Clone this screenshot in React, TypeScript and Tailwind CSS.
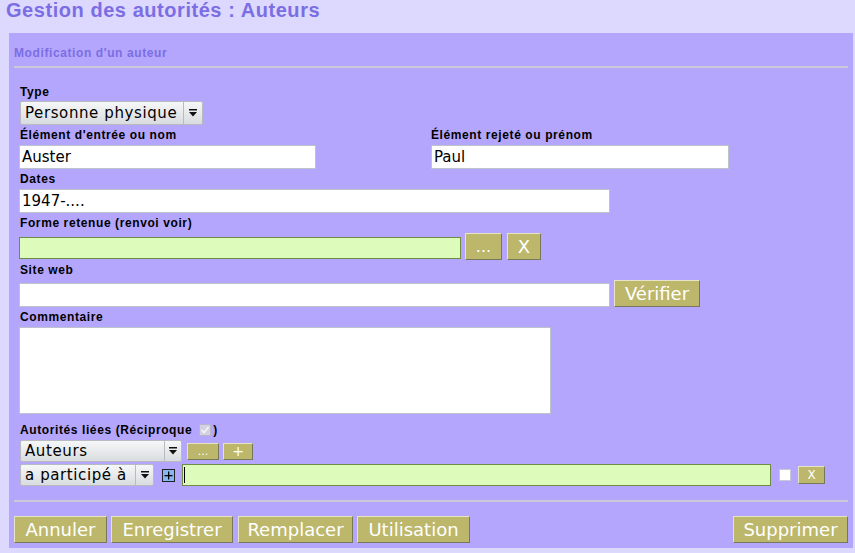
import React from 'react';

const label = "block ml-[1px] text-[12px] leading-[14px] font-bold tracking-[0.6px] text-black";
const input = "h-[24px] border border-[#bcc3cb] bg-white px-[2px] text-[15px] leading-[22px] text-black";
const btn = "flex items-center justify-center bg-[#bdb76b] border border-t-[#e6e4c4] border-l-[#e6e4c4] border-b-[#77775a] border-r-[#77775a] text-white";

function Arrow() {
    return (
        <svg width="10" height="8" viewBox="0 0 10 8">
            <rect x="1" y="0" width="8" height="1.5" fill="#111" />
            <path d="M1 3 L9 3 L5 7.5 Z" fill="#111" />
        </svg>
    );
}

function Select({ value, width, height, sep }: { value: string; width: number; height: number; sep: number }) {
    return (
        <div
            className="flex items-stretch ml-[1px] border border-[#b8bcc2] rounded-[2px] bg-gradient-to-b from-[#f6f7f8] to-[#d9dcdf] text-black"
            style={{ width, height }}
        >
            <div className="flex-1 pl-[4px] flex items-center text-[15px] tracking-[0.6px] whitespace-nowrap overflow-hidden" style={{ fontFamily: '"DejaVu Sans", sans-serif' }}>
                {value}
            </div>
            <div className="flex items-center justify-center border-l border-[#b8bcc2]" style={{ width: sep }}>
                <Arrow />
            </div>
        </div>
    );
}

export default function App() {
    return (
        <div className="w-[855px] h-[553px] bg-[#ddd8fe] overflow-hidden" style={{ fontFamily: '"Liberation Sans", Arial, sans-serif' }}>
            <div className="h-[33px] pl-[6px] text-[20px] leading-[20px] font-bold tracking-[0.55px] text-[#7b6ee4]">
                Gestion des autorités : Auteurs
            </div>

            <div className="ml-[9px] w-[844px] h-[515px] bg-[#b4a6fc] px-[5px] pt-[13px]">
                <div className="text-[12px] leading-[14px] font-bold tracking-[0.6px] text-[#7b6ee4]">
                    Modification d'un auteur
                </div>
                <div className="mt-[6px] h-[2px] bg-[#cbc9d6]" />

                <div className="pl-[5px]">
                    <div className="mt-[17px]">
                        <span className={label}>Type</span>
                        <div className="mt-[2px]">
                            <Select value="Personne physique" width={183} height={24} sep={19} />
                        </div>
                    </div>

                    <div className="mt-[3px] grid grid-cols-[412px_1fr]">
                        <div>
                            <span className={label}>Élément d'entrée ou nom</span>
                            <div className={`${input} mt-[3px] w-[297px]`} style={{ fontFamily: '"DejaVu Sans", sans-serif' }}>Auster</div>
                        </div>
                        <div>
                            <span className="block text-[12px] leading-[14px] font-bold tracking-[0.6px] text-black">Élément rejeté ou prénom</span>
                            <div className={`${input} mt-[3px] w-[298px]`} style={{ fontFamily: '"DejaVu Sans", sans-serif' }}>Paul</div>
                        </div>
                    </div>

                    <div className="mt-[3px]">
                        <span className={label}>Dates</span>
                        <div className={`${input} mt-[3px] w-[591px]`} style={{ fontFamily: '"DejaVu Sans", sans-serif' }}>1947-....</div>
                    </div>

                    <div className="mt-[3px]">
                        <span className={label}>Forme retenue (renvoi voir)</span>
                        <div className="mt-[3px] flex items-end h-[27px]" style={{ fontFamily: '"DejaVu Sans", sans-serif' }}>
                            <div className="mb-[1px] w-[442px] h-[22px] bg-[#ddfcbb] border border-[#6f8c45]" />
                            <div className={`${btn} ml-[4px] w-[37px] h-[27px] text-[16px]`}>...</div>
                            <div className={`${btn} ml-[5px] w-[34px] h-[27px] text-[18px]`}>X</div>
                        </div>
                    </div>

                    <div className="mt-[3px]">
                        <span className={label}>Site web</span>
                        <div className="mt-[3px] flex items-end h-[27px]" style={{ fontFamily: '"DejaVu Sans", sans-serif' }}>
                            <div className={`${input} w-[591px]`} />
                            <div className={`${btn} ml-[4px] w-[86px] h-[27px] text-[18px]`}>Vérifier</div>
                        </div>
                    </div>

                    <div className="mt-[3px]">
                        <span className={label}>Commentaire</span>
                        <div className="mt-[3px] w-[532px] h-[87px] bg-white border border-[#bcc3cb]" />
                    </div>

                    <div className="mt-[9px]">
                        <span className={`${label} flex items-center`}>
                            Autorités liées (Réciproque
                            <span className="ml-[7px] inline-flex items-center justify-center w-[12px] h-[12px] bg-[#d4d2e0] border border-[#b8b6c8] rounded-[1px]">
                                <svg width="10" height="10" viewBox="0 0 10 10">
                                    <path d="M1.5 5 L4 7.5 L8.5 2" stroke="#f4f4f8" strokeWidth="1.6" fill="none" />
                                </svg>
                            </span>
                            <span className="ml-[2px]">)</span>
                        </span>

                        <div className="mt-[3px] flex items-center h-[22px]" style={{ fontFamily: '"DejaVu Sans", sans-serif' }}>
                            <Select value="Auteurs" width={162} height={22} sep={17} />
                            <div className={`${btn} ml-[5px] w-[32px] h-[17px] text-[11px] leading-none`}>...</div>
                            <div className={`${btn} ml-[4px] w-[30px] h-[17px] text-[14px] leading-none`}>+</div>
                        </div>

                        <div className="mt-[2px] flex items-center h-[22px]" style={{ fontFamily: '"DejaVu Sans", sans-serif' }}>
                            <Select value="a participé à" width={134} height={22} sep={18} />
                            <div className="ml-[8px] w-[13px] h-[13px] bg-[#86b6f4] border border-[#222] flex items-center justify-center">
                                <svg width="9" height="9" viewBox="0 0 9 9">
                                    <rect x="4" y="0.5" width="1.3" height="8" fill="#000" />
                                    <rect x="0.5" y="4" width="8" height="1.3" fill="#000" />
                                </svg>
                            </div>
                            <div className="ml-[7px] w-[589px] h-[22px] bg-[#ddfcbb] border border-[#6f8c45] flex items-center pl-[1px]">
                                <span className="w-[1px] h-[16px] bg-black" />
                            </div>
                            <div className="ml-[8px] w-[12px] h-[12px] bg-white border border-[#c8c8d8]" />
                            <div className={`${btn} ml-[7px] w-[27px] h-[18px] text-[12px] leading-none`}>X</div>
                        </div>
                    </div>
                </div>

                <div className="mt-[14px] h-[2px] bg-[#cbc9d6]" />

                <div className="mt-[14px] flex items-center h-[27px] text-[18px]" style={{ fontFamily: '"DejaVu Sans", sans-serif' }}>
                    <div className={`${btn} w-[93px] h-[27px]`}>Annuler</div>
                    <div className={`${btn} ml-[4px] w-[122px] h-[27px]`}>Enregistrer</div>
                    <div className={`${btn} ml-[5px] w-[115px] h-[27px]`}>Remplacer</div>
                    <div className={`${btn} ml-[4px] w-[113px] h-[27px]`}>Utilisation</div>
                    <div className={`${btn} ml-auto w-[115px] h-[27px]`}>Supprimer</div>
                </div>
            </div>
        </div>
    );
}
